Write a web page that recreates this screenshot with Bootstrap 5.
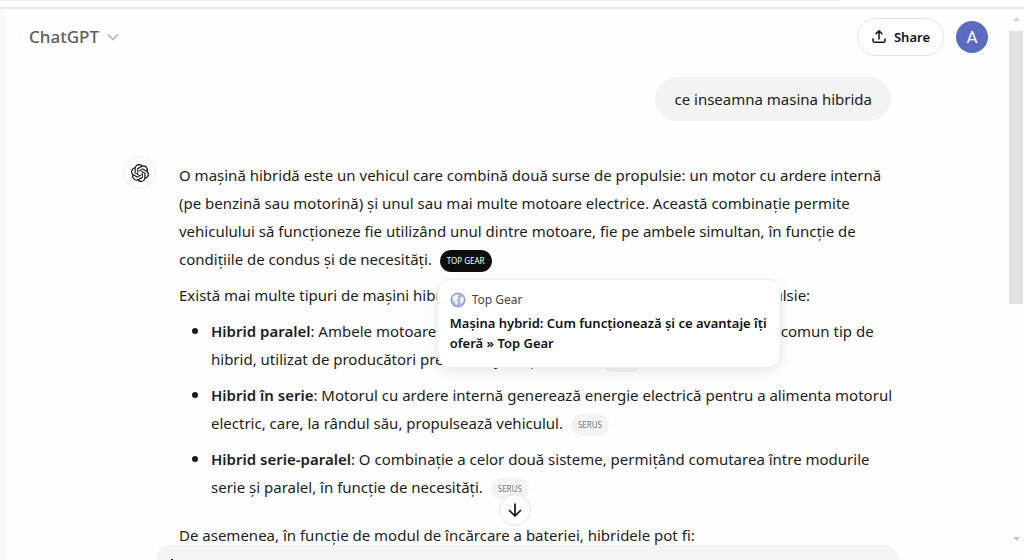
<!DOCTYPE html>
<html lang="ro">
<head>
<meta charset="utf-8">
<meta name="viewport" content="width=device-width, initial-scale=1">
<title>ChatGPT</title>
<link href="https://cdn.jsdelivr.net/npm/bootstrap@5.3.0/dist/css/bootstrap.min.css" rel="stylesheet">
<style>
  body { font-family: "Noto Sans", "Open Sans", sans-serif; font-size: 15px; line-height: 28px; color: #1c1c1c; background: #fefefe; }
  .top-edge { height: 9px; border-bottom: 2px solid #e8e8e8; }
  .tab-line { width: 82%; height: 1px; background: #e9ebf5; }
  .side-edge { width: 5px; background: #f9f9f9; }
  .topbar { padding: 9px 21px 0 24px; }
  .model-btn { font-size: 17px; line-height: 28px; font-weight: 500; color: #5d5d5d; gap: 8px; }
  .share-btn { height: 38px; padding: 0 13px; gap: 7px; font-size: 13px; line-height: 20px; font-weight: 600; color: #111; background: #fff; border: 1px solid #e2e2e2; }
  .user-dot { width: 32px; height: 32px; background: #5c6bc0; color: #fff; font-family: Roboto, sans-serif; font-size: 17px; line-height: 32px; }
  .thread { max-width: 768px; padding-top: 21px; }
  .ask { padding: 8px 19px; background: #f3f3f3; border-radius: 22px; }
  .reply { margin-top: 35px; gap: 23px; }
  .bot-dot { width: 33px; height: 33px; border: 1px solid #ededed; }
  .answer { padding-top: 5px; white-space: nowrap; }
  .answer p { margin-bottom: 8px; }
  .answer ul { padding-left: 32px; margin-bottom: 20px; }
  .answer li { margin-bottom: 8px; }
  .answer li::marker { font-size: 17px; }
  .answer strong { font-weight: 600; }
  .source-tag { display: inline-block; height: 22px; padding: 0 7px; margin-left: 4px; border-radius: 11px; background: #f3f3f3; color: #777; font-size: 8px; line-height: 22px; text-decoration: none; vertical-align: middle; }
  .source-tag.active-tag { background: #0d0d0d; color: #fff; }
  .source-card { top: 29px; left: 1px; width: 344px; height: 89px; padding: 10px 12px; border: 1px solid #eee; border-radius: 14px; background: #fff; box-shadow: 0 4px 14px rgba(0,0,0,.09); white-space: normal; z-index: 5; color: #111; text-decoration: none; }
  .source-site { font-size: 12px; line-height: 20px; gap: 6px; color: #444; }
  .source-title { font-size: 13px; line-height: 20px; font-weight: 600; margin-top: 3px; }
  .composer { bottom: 0; left: 15%; right: 11%; height: 15px; background: #f4f4f4; border-radius: 26px 26px 0 0; z-index: 3; }
  .attach-btn { margin: 13px 10px; }
  .down-btn { width: 32px; height: 32px; bottom: 34px; left: calc(50% - 8px); background: #fff; border: 1px solid #e3e3e3; z-index: 4; }
  .scroll-rail { width: 15px; padding: 8px 0 18px; }
  .scroll-thumb { width: 14px; height: 52%; margin-top: 7px; background: #e1e1e1; }
</style>
</head>
<body>
<div class="vh-100 d-flex flex-column overflow-hidden">
  <div class="top-edge flex-shrink-0"><div class="tab-line"></div></div>
  <div class="d-flex flex-grow-1 overflow-hidden">
    <aside class="side-edge flex-shrink-0"></aside>
    <main class="flex-grow-1 position-relative overflow-hidden">
      <header class="topbar d-flex justify-content-between align-items-center">
        <button class="model-btn btn p-0 border-0 d-flex align-items-center" type="button">ChatGPT
          <svg width="12" height="8" viewBox="0 0 12 8" fill="none" stroke="#b0b0b0" stroke-width="1.5"><path d="M1 1.5l5 5 5-5"/></svg>
        </button>
        <div class="d-flex align-items-center gap-2">
          <button class="share-btn btn rounded-pill d-flex align-items-center me-1" type="button">
            <svg width="16" height="16" viewBox="0 0 16 16" fill="none" stroke="#111" stroke-width="1.5" stroke-linecap="round" stroke-linejoin="round"><path d="M8 10V2M5 4.700L8 1.700 11 4.700M2 10v1.700a1.500 1.500 0 0 0 1.500 1.500h9a1.500 1.500 0 0 0 1.500-1.500V10"/></svg>
            Share
          </button>
          <button class="user-dot btn rounded-circle border-0 p-0" type="button" aria-label="Cont">A</button>
        </div>
      </header>
      <div class="thread mx-auto">
        <div class="d-flex justify-content-end"><div class="ask">ce inseamna masina hibrida</div></div>
        <div class="reply d-flex align-items-start">
          <div class="bot-dot rounded-circle d-flex align-items-center justify-content-center flex-shrink-0">
            <svg width="18" height="18" viewBox="0 0 24 24" fill="#111"><path d="M22.2819 9.8211a5.9847 5.9847 0 0 0-.5157-4.9108 6.0462 6.0462 0 0 0-6.5098-2.9A6.0651 6.0651 0 0 0 4.9807 4.1818a5.9847 5.9847 0 0 0-3.9977 2.9 6.0462 6.0462 0 0 0 .7427 7.0966 5.98 5.98 0 0 0 .511 4.9107 6.051 6.051 0 0 0 6.5146 2.9001A5.9847 5.9847 0 0 0 13.2599 24a6.0557 6.0557 0 0 0 5.7718-4.2058 5.9894 5.9894 0 0 0 3.9977-2.9001 6.0557 6.0557 0 0 0-.7475-7.0729zm-9.022 12.6081a4.4755 4.4755 0 0 1-2.8764-1.0408l.1419-.0804 4.7783-2.7582a.7948.7948 0 0 0 .3927-.6813v-6.7369l2.02 1.1686a.071.071 0 0 1 .038.052v5.5826a4.504 4.504 0 0 1-4.4945 4.4944zm-9.6607-4.1254a4.4708 4.4708 0 0 1-.5346-3.0137l.142.0852 4.783 2.7582a.7712.7712 0 0 0 .7806 0l5.8428-3.3685v2.3324a.0804.0804 0 0 1-.0332.0615L9.74 19.9502a4.4992 4.4992 0 0 1-6.1408-1.6464zM2.3408 7.8956a4.485 4.485 0 0 1 2.3655-1.9728V11.6a.7664.7664 0 0 0 .3879.6765l5.8144 3.3543-2.0201 1.1685a.0757.0757 0 0 1-.071 0l-4.8303-2.7865A4.504 4.504 0 0 1 2.3408 7.872zm16.5963 3.8558L13.1038 8.364 15.1192 7.2a.0757.0757 0 0 1 .071 0l4.8303 2.7913a4.4944 4.4944 0 0 1-.6765 8.1042v-5.6772a.79.79 0 0 0-.407-.667zm2.0107-3.0231l-.142-.0852-4.7735-2.7818a.7759.7759 0 0 0-.7854 0L9.409 9.2297V6.8974a.0662.0662 0 0 1 .0284-.0615l4.8303-2.7866a4.4992 4.4992 0 0 1 6.6802 4.66zM8.3065 12.863l-2.02-1.1638a.0804.0804 0 0 1-.038-.0567V6.0742a4.4992 4.4992 0 0 1 7.3757-3.4537l-.142.0805L8.704 5.459a.7948.7948 0 0 0-.3927.6813zm1.0976-2.3654l2.602-1.4998 2.6069 1.4998v2.9994l-2.5974 1.4997-2.6067-1.4997Z"/></svg>
          </div>
          <div class="answer">
            <p>O mașină hibridă este un vehicul care combină două surse de propulsie: un motor cu ardere internă<br>(pe benzină sau motorină) și unul sau mai multe motoare electrice. Această combinație permite<br>vehiculului să funcționeze fie utilizând unul dintre motoare, fie pe ambele simultan, în funcție de<br>condițiile de condus și de necesități. <span class="position-relative d-inline-block lh-1"><a class="source-tag active-tag" href="#">TOP GEAR</a><a class="source-card position-absolute d-block" href="#"><span class="source-site d-flex align-items-center"><svg width="16" height="16" viewBox="0 0 16 16"><circle cx="8" cy="8" r="7" fill="#a9b2dc" stroke="#8791c4"/><path d="M3 4.500C5 2 8 2 9 3L7.500 5.500 9 7 6.500 8 8 10.500 6.500 13 4.500 10 2.500 7.500zM10 6l3-1.500L14 8l-2.500 4-1.500-2z" fill="#f1f3fc"/></svg>Top Gear</span><span class="source-title d-block">Mașina hybrid: Cum funcționează și ce avantaje îți oferă » Top Gear</span></a></span></p>
            <p>Există mai multe tipuri de mașini hibride, în funcție de tehnologia sistemului de propulsie:</p>
            <ul>
              <li><strong>Hibrid paralel</strong>: Ambele motoare pot propulsa roțile simultan. Acesta este cel mai comun tip de<br>hibrid, utilizat de producători precum Toyota și Honda. <a class="source-tag" href="#">SERUS</a></li>
              <li><strong>Hibrid în serie</strong>: Motorul cu ardere internă generează energie electrică pentru a alimenta motorul<br>electric, care, la rândul său, propulsează vehiculul. <a class="source-tag" href="#">SERUS</a></li>
              <li><strong>Hibrid serie-paralel</strong>: O combinație a celor două sisteme, permițând comutarea între modurile<br>serie și paralel, în funcție de necesități. <a class="source-tag" href="#">SERUS</a></li>
            </ul>
            <p>De asemenea, în funcție de modul de încărcare a bateriei, hibridele pot fi:</p>
          </div>
        </div>
      </div>
      <button class="down-btn btn rounded-circle position-absolute p-0 d-flex align-items-center justify-content-center" type="button" aria-label="Jos">
        <svg width="16" height="16" viewBox="0 0 16 16" fill="none" stroke="#111" stroke-width="1.700" stroke-linecap="round" stroke-linejoin="round"><path d="M8 2v12M2.500 8.500L8 14l5.500-5.500"/></svg>
      </button>
      <div class="composer position-absolute overflow-hidden">
        <button class="attach-btn btn p-0 border-0 d-block" type="button" aria-label="Atașează"><svg class="d-block" width="14" height="20" viewBox="0 0 14 20" fill="none" stroke="#222" stroke-width="2"><path d="M2 8v5a5 5 0 0 0 10 0V5M6 13V1"/></svg></button>
      </div>
    </main>
    <div class="scroll-rail d-flex flex-column flex-shrink-0" aria-hidden="true">
      <svg class="flex-shrink-0 ms-1" width="7" height="7" viewBox="0 0 7 7"><path d="M0 4L3.500 0 7 4z" fill="#d0d0d0"/></svg>
      <div class="scroll-thumb"></div>
      <svg class="flex-shrink-0 ms-1 mt-auto" width="7" height="7" viewBox="0 0 7 7"><path d="M0 2h7L3.500 6z" fill="#c4c4c4"/></svg>
    </div>
  </div>
</div>
<script src="https://cdn.jsdelivr.net/npm/bootstrap@5.3.0/dist/js/bootstrap.bundle.min.js"></script>
</body>
</html>
